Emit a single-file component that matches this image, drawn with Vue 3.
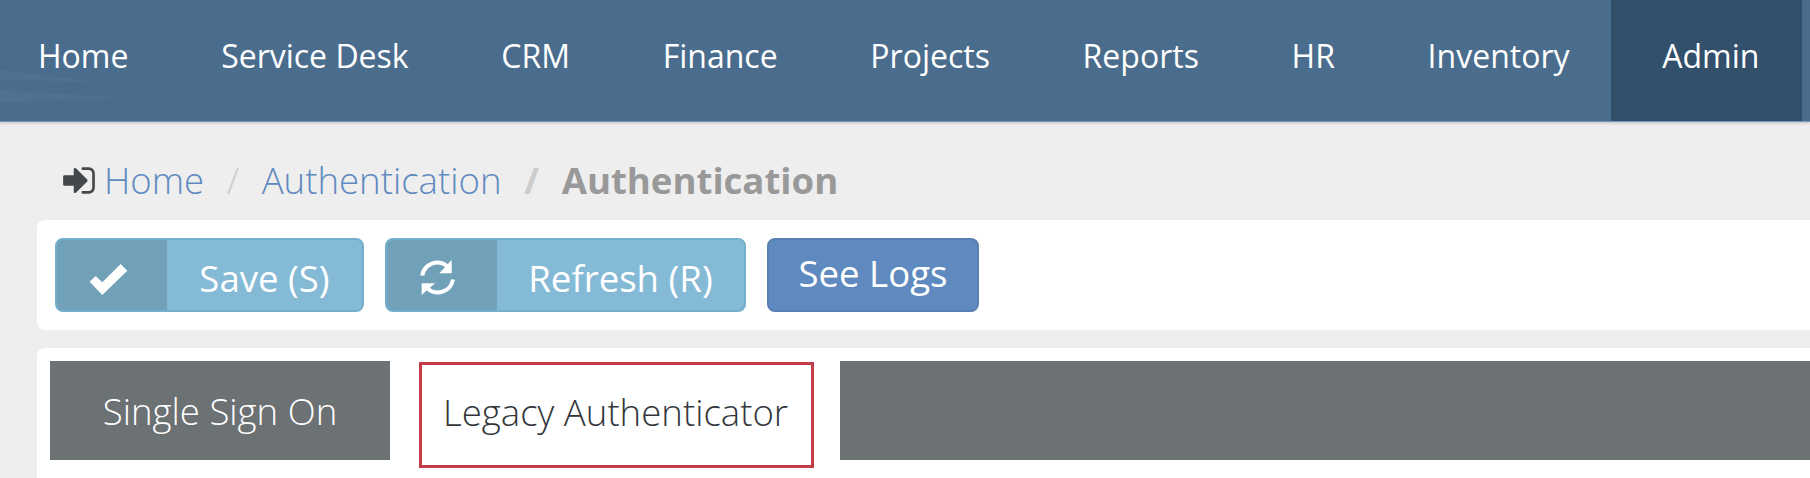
<template>
  <div class="page">
    <header class="topbar">
      <svg class="streaks" width="130" height="60" viewBox="0 0 130 60" aria-hidden="true">
        <path d="M0 8 L100 20 L0 18 Z" fill="#fff" opacity="0.03" />
        <path d="M0 28 L125 36 L0 40 Z" fill="#fff" opacity="0.03" />
      </svg>
      <nav class="menu">
        <a
          v-for="item in menuItems"
          :key="item"
          class="menu-item"
          :class="{ active: item === 'Admin' }"
        >{{ item }}</a>
      </nav>
    </header>

    <div class="breadcrumb">
      <svg class="crumb-icon" viewBox="0 0 1536 1792" width="32" height="37" aria-hidden="true">
        <path fill="#44484b" d="M1184 896q0 26-19 45l-544 544q-19 19-45 19t-45-19-19-45v-288h-448q-26 0-45-19t-19-45v-384q0-26 19-45t45-19h448v-288q0-26 19-45t45-19 45 19l544 544q19 19 19 45zm352-352v704q0 119-84.5 203.5t-203.5 84.5h-320q-13 0-22.5-9.5t-9.5-22.5q0-4-1-20t-.5-26.5 3-23.5 10-19.5 20.5-6.5h320q66 0 113-47t47-113v-704q0-66-47-113t-113-47h-312l-11.5-1-11.5-3-8-5.5-7-9-2-13.5q0-4-1-20t-.5-26.5 3-23.5 10-19.5 20.5-6.5h320q119 0 203.5 84.5t84.5 203.5z" />
      </svg>
      <a class="crumb-link">Home</a>
      <span class="crumb-sep">/</span>
      <a class="crumb-link">Authentication</a>
      <span class="crumb-sep bold">/</span>
      <span class="crumb-current">Authentication</span>
    </div>

    <section class="card toolbar">
      <button class="btn btn-info save">
        <span class="btn-icon check">
          <svg viewBox="0 0 40 34" width="40" height="34" aria-hidden="true">
            <path fill="#fff" d="M0.7 18.7 L6.7 13 L13.3 19.3 L31.7 1 L38.3 7.7 L13.3 32 Z" />
          </svg>
        </span>
        <span class="btn-label">Save (S)</span>
      </button>
      <button class="btn btn-info refresh">
        <span class="btn-icon sync">
          <svg viewBox="0 0 36 36" width="36" height="36" aria-hidden="true">
            <path d="M2.2 15.5 A15.5 15.5 0 0 1 27 6" fill="none" stroke="#fff" stroke-width="4" />
            <path d="M33 19.5 A15.5 15.5 0 0 1 8 29" fill="none" stroke="#fff" stroke-width="4" />
            <path d="M31.7 0 V13.3 H19.3 Z" fill="#fff" />
            <path d="M1.7 35 V23.3 H15 Z" fill="#fff" />
          </svg>
        </span>
        <span class="btn-label">Refresh (R)</span>
      </button>
      <button class="btn btn-primary">See Logs</button>
    </section>

    <section class="card tabs-card">
      <div class="tabs">
        <a class="tab sso">Single Sign On</a>
        <a class="tab selected">Legacy Authenticator</a>
        <div class="tab filler"></div>
      </div>
    </section>
  </div>
</template>

<script setup>
const menuItems = [
  "Home",
  "Service Desk",
  "CRM",
  "Finance",
  "Projects",
  "Reports",
  "HR",
  "Inventory",
  "Admin",
];
</script>

<style>
html,
body {
  margin: 0;
  background: #eeeeee;
  overflow: hidden;
}
</style>

<style scoped>
.page {
  height: 478px;
  background: #eeeeee;
  font-family: "Open Sans", "Noto Sans", sans-serif;
  overflow: hidden;
}

.topbar {
  position: relative;
  height: 121px;
  background: #4b6d8d;
  border-bottom: 1px solid #6f95b8;
  box-shadow: 0 1px 3px rgba(0, 0, 0, 0.2);
}

.streaks {
  position: absolute;
  left: 0;
  top: 62px;
}

.menu {
  position: relative;
  display: flex;
  height: 121px;
  padding-left: 38px;
}

.menu-item {
  display: flex;
  align-items: center;
  margin-right: 92.7px;
  padding-bottom: 10px;
  color: #fff;
  font-size: 32px;
  white-space: nowrap;
}

.menu-item.active {
  margin: 0 0 0 -51px;
  padding: 0 43px 10px 51px;
  background: #324f6b;
}

.breadcrumb {
  display: flex;
  align-items: center;
  height: 36px;
  margin-top: 40px;
  padding-left: 63px;
  font-size: 36.6px;
  font-weight: 300;
}

.crumb-icon {
  margin-right: 9px;
}

.crumb-link {
  color: #5f8ac0;
}

.crumb-sep {
  margin: 0 22.5px;
  color: #cccccc;
}

.crumb-sep.bold {
  font-weight: 700;
}

.crumb-current {
  color: #999999;
  font-weight: 700;
}

.card {
  margin-left: 37px;
  background: #fff;
  border-radius: 8px 0 0 8px;
}

.toolbar {
  display: flex;
  gap: 21px;
  height: 110px;
  margin-top: 22px;
  padding: 18px 0 0 18px;
  box-sizing: border-box;
}

.btn {
  display: flex;
  align-items: stretch;
  height: 74px;
  padding: 0;
  border-radius: 8px;
  color: #fff;
  font-family: inherit;
  font-size: 36.6px;
  box-sizing: border-box;
}

.btn-info {
  background: #85bad6;
  border: 2px solid #74aecd;
}

.btn-info.save {
  width: 309px;
}

.btn-info.refresh {
  width: 361px;
}

.btn-icon {
  display: flex;
  align-items: center;
  justify-content: center;
  width: 110px;
  background: #71a1b9;
  border-radius: 6px 0 0 6px;
  box-sizing: border-box;
}

.btn-icon.check {
  padding: 10px 6px 0 0;
}

.btn-icon.sync {
  padding: 6px 8px 0 0;
}

.btn-label {
  flex: 1;
  padding-top: 13px;
  text-align: center;
  white-space: nowrap;
}

.btn-primary {
  align-items: center;
  justify-content: center;
  width: 212px;
  padding-bottom: 4px;
  background: #5f8ac0;
  border: 2px solid #5880b3;
}

.tabs-card {
  height: 140px;
  margin-top: 18px;
  padding: 13px 0 0 13px;
  box-sizing: border-box;
  border-radius: 8px 0 0 0;
}

.tabs {
  display: flex;
  align-items: flex-start;
  font-size: 36.6px;
  font-weight: 300;
}

.tab {
  display: flex;
  align-items: center;
  justify-content: center;
  height: 99px;
  box-sizing: border-box;
  white-space: nowrap;
}

.sso {
  width: 340px;
  background: #6c7174;
  color: #fff;
}

.selected {
  width: 395px;
  height: 106px;
  margin: 1px 26px 0 29px;
  padding: 0 2px 6px 0;
  border: 3px solid #c23d48;
  color: #33373b;
}

.filler {
  flex: 1;
  background: #6c7174;
}
</style>
